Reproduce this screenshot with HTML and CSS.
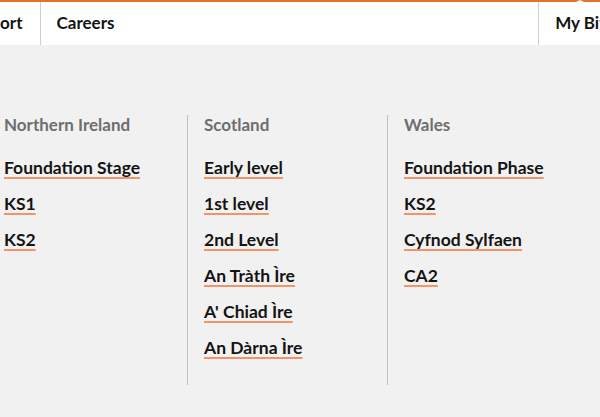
FILE: index.html
```html
<!DOCTYPE html>
<html lang="en">
<head>
<meta charset="UTF-8">
<meta name="viewport" content="width=device-width, initial-scale=1.0">
<title>Bitesize - Nations</title>
<link rel="stylesheet" href="styles.css">
</head>
<body>
    <header class="topbar">
        <nav class="nav">
            <a class="nav-item nav-support" href="#">Support</a>
            <a class="nav-item" href="#">Careers</a>
            <span class="nav-spacer"></span>
            <a class="nav-item nav-mybits" href="#">My Bitesize</a>
        </nav>
    </header>

    <main class="nations">
        <section class="nation">
            <h2>Northern Ireland</h2>
            <ul>
                <li><a href="#">Foundation Stage</a></li>
                <li><a href="#">KS1</a></li>
                <li><a href="#">KS2</a></li>
            </ul>
        </section>
        <section class="nation">
            <h2>Scotland</h2>
            <ul>
                <li><a href="#">Early level</a></li>
                <li><a href="#">1st level</a></li>
                <li><a href="#">2nd Level</a></li>
                <li><a href="#">An Tràth Ìre</a></li>
                <li><a href="#">A' Chiad Ìre</a></li>
                <li><a href="#">An Dàrna Ìre</a></li>
            </ul>
        </section>
        <section class="nation">
            <h2>Wales</h2>
            <ul>
                <li><a href="#">Foundation Phase</a></li>
                <li><a href="#">KS2</a></li>
                <li><a href="#">Cyfnod Sylfaen</a></li>
                <li><a href="#">CA2</a></li>
            </ul>
        </section>
    </main>
</body>
</html>
```

FILE: styles.css
```css
body {
    margin: 0;
    background-color: #f1f1f1;
    font-family: Lato, "Noto Sans", sans-serif;
    color: #141414;
    overflow: hidden;
}

.topbar {
    background: #fff;
    border-top: 2px solid #e8712a;
    height: 43px;
}

.nav {
    display: flex;
    height: 100%;
    margin: 0 -60px 0 -54px;
    white-space: nowrap;
}

.nav-item {
    display: flex;
    align-items: center;
    padding: 0 17px 2px 16px;
    font-size: 17px;
    font-weight: 700;
    color: #141414;
    text-decoration: none;
}

.nav-support {
    border-right: 1px solid #cfcfcf;
}

.nav-spacer {
    flex: 1;
}

.nav-mybits {
    position: relative;
    border-left: 1px solid #cfcfcf;
}

.nav-mybits::before {
    content: "";
    position: absolute;
    top: -2px;
    left: 37px;
    border-left: 4px solid transparent;
    border-right: 4px solid transparent;
    border-bottom: 2px solid #fff;
}

.nations {
    display: grid;
    grid-template-columns: 200px 200px 200px;
    margin: 70px 0 0 -13px;
}

.nation {
    border-left: 1px solid #c3c0bc;
    padding: 0 0 27px 16px;
}

.nation h2 {
    margin: 0 0 23px;
    font-size: 17px;
    line-height: 20px;
    font-weight: 700;
    color: #6e6e6e;
}

.nation ul {
    list-style: none;
    margin: 0;
    padding: 0;
}

.nation li {
    line-height: 20px;
    margin-bottom: 16px;
}

.nation li:last-child {
    margin-bottom: 0;
}

.nation a {
    font-size: 17.5px;
    font-weight: 700;
    color: #141414;
    text-decoration: underline;
    text-decoration-color: #f29465;
    text-decoration-thickness: 2px;
    text-underline-offset: 3px;
}
```
